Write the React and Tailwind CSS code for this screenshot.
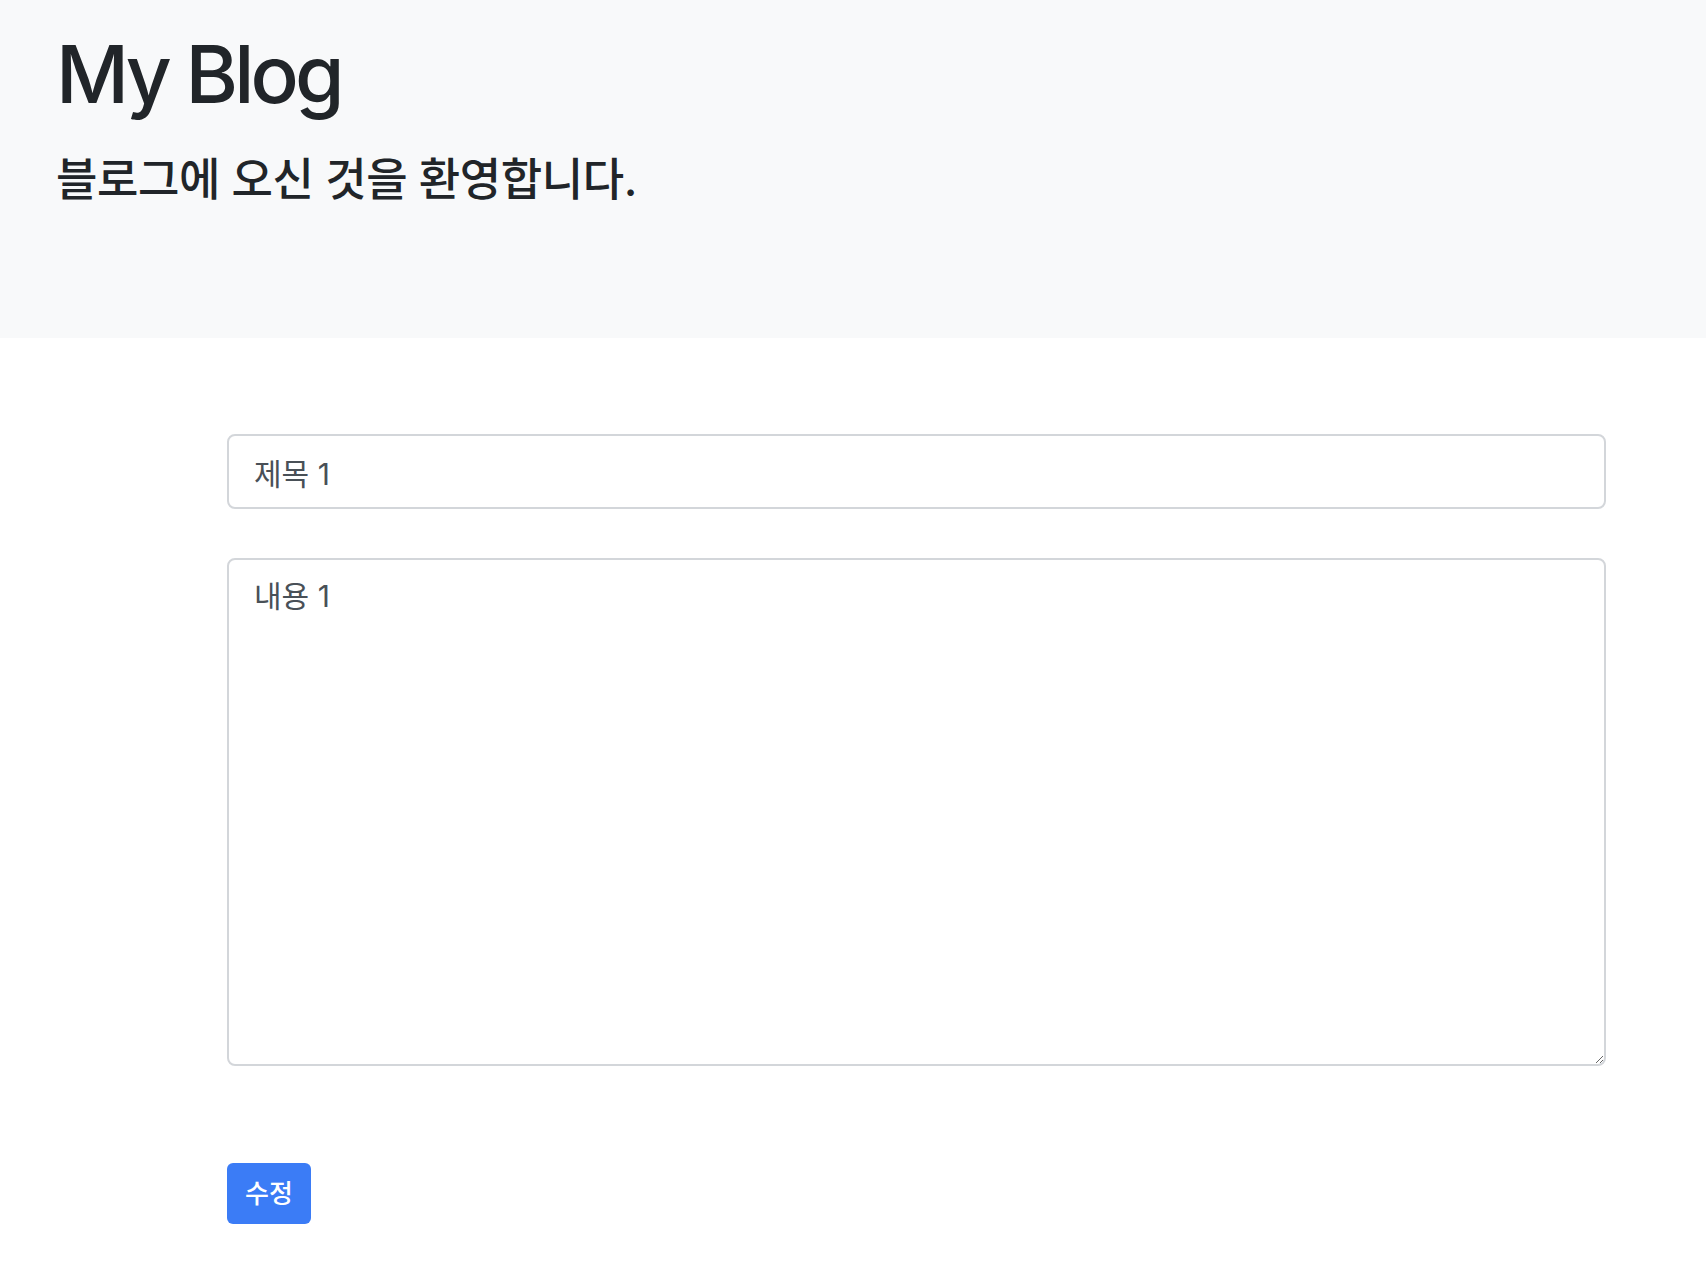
import React from 'react';

const App = () => {
  return (
    <div className="min-h-screen bg-white text-[#212529] font-['Inter','Noto_Sans_CJK_KR',sans-serif]">
      {/* Jumbotron */}
      <div className="h-[338px] bg-[#f8f9fa] pl-[56px] pt-[26px]">
        <h1 className="text-[80px] leading-[96px] font-medium tracking-[-3.8px]">My Blog</h1>
        <p className="mt-[30px] text-[45px] leading-[56px] font-medium tracking-[-0.4px]">블로그에 오신 것을 환영합니다.</p>
      </div>

      {/* Edit form */}
      <div className="pl-[227px] pr-[100px] pt-[96px]">
        <input
          type="text"
          defaultValue="제목 1"
          className="block w-full h-[75px] px-[25px] text-[30px] text-[#495057] border-2 border-[#d3d6da] rounded-[8px] outline-none"
        />
        <textarea
          defaultValue="내용 1"
          className="block w-full h-[508px] mt-[49px] px-[25px] pt-[14px] text-[30px] leading-[44px] text-[#495057] border-2 border-[#d3d6da] rounded-[8px] outline-none"
        />
        <button className="mt-[97px] w-[84px] h-[61px] bg-[#3b7cf6] text-white text-[26px] font-medium rounded-[6px]">
          수정
        </button>
      </div>
    </div>
  );
};

export default App;
